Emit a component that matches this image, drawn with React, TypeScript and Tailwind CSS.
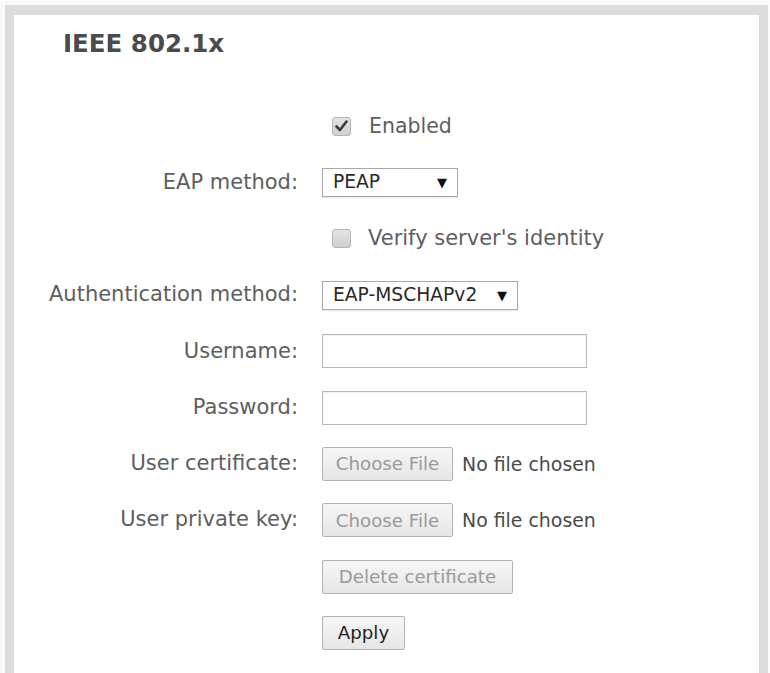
import React from "react";

const font = { fontFamily: '"DejaVu Sans", Verdana, sans-serif' };

function Check({ checked }: { checked: boolean }) {
  return (
    <div className="w-[19px] h-[19px] rounded-[3px] border border-[#b4b4b4] bg-[linear-gradient(#e4e4e4,#cfcfcf)] flex items-center justify-center">
      {checked && (
        <svg width="13" height="12" viewBox="0 0 13 12">
          <path d="M1.5 6.5 L5 10 L11.5 1.5" fill="none" stroke="#3a3a3a" strokeWidth="2.6" strokeLinecap="round" strokeLinejoin="round" />
        </svg>
      )}
    </div>
  );
}

function Select({ value, width }: { value: string; width: string }) {
  return (
    <div className={`${width} h-[29px] border border-[#a8a8a8] bg-white flex items-center justify-between pl-[10px] pr-[10px] shadow-[0_1px_1px_rgba(0,0,0,0.08)] text-[18.7px] text-[#2a2a2a]`}>
      <span>{value}</span>
      <span className="text-[13px] text-[#111] leading-none">▼</span>
    </div>
  );
}

function Input() {
  return <div className="w-[265px] h-[34px] border-[1.5px] border-[#b8b8b8] bg-white shadow-[inset_0_1px_1px_rgba(0,0,0,0.06)]" />;
}

function Btn({ children, w, disabled }: { children: React.ReactNode; w: string; disabled?: boolean }) {
  return (
    <div
      className={`${w} h-[34px] border border-[#b3b3b3] rounded-[2px] bg-[linear-gradient(#f6f6f6,#e6e6e6)] flex items-center justify-center text-[18.2px] ${
        disabled ? "text-[#9a9a9a]" : "text-[#1e1e1e]"
      }`}
    >
      {children}
    </div>
  );
}

export default function App() {
  const label = "text-right text-[21px] text-[#5e5e5e] whitespace-nowrap";
  return (
    <div className="w-[770px] h-[673px] bg-[#fbfbfb] overflow-hidden" style={font}>
      <div className="ml-[5px] mt-[5px] w-[763px] h-[678px] border-[9px] border-t-[10px] border-[#dcdcdc] bg-white">
        <div className="pl-[49px] pt-[15px] text-[24.5px] leading-[28px] font-bold text-[#4b4b4b]">
          IEEE 802.1x
        </div>
        <div className="mt-[40px] grid grid-cols-[284px_auto] gap-x-[24px] auto-rows-[56.3px] items-center">
          <div />
          <div className="flex items-center gap-[18px] pl-[10px]">
            <Check checked />
            <span className="text-[20.5px] text-[#5e5e5e]">Enabled</span>
          </div>

          <div className={label}>EAP method:</div>
          <Select value="PEAP" width="w-[136px]" />

          <div />
          <div className="flex items-center gap-[17px] pl-[10px]">
            <Check checked={false} />
            <span className="text-[21px] text-[#5e5e5e]">Verify server's identity</span>
          </div>

          <div className={label}>Authentication method:</div>
          <Select value="EAP-MSCHAPv2" width="w-[196px]" />

          <div className={label}>Username:</div>
          <Input />

          <div className={label}>Password:</div>
          <Input />

          <div className={label}>User certificate:</div>
          <div className="flex items-center gap-[9px]">
            <Btn w="w-[131px]" disabled>Choose File</Btn>
            <span className="text-[18.9px] text-[#4a4a4a]">No file chosen</span>
          </div>

          <div className={label}>User private key:</div>
          <div className="flex items-center gap-[9px]">
            <Btn w="w-[131px]" disabled>Choose File</Btn>
            <span className="text-[18.9px] text-[#4a4a4a]">No file chosen</span>
          </div>

          <div />
          <Btn w="w-[191px]" disabled>Delete certificate</Btn>

          <div />
          <Btn w="w-[83px]">Apply</Btn>
        </div>
      </div>
    </div>
  );
}
